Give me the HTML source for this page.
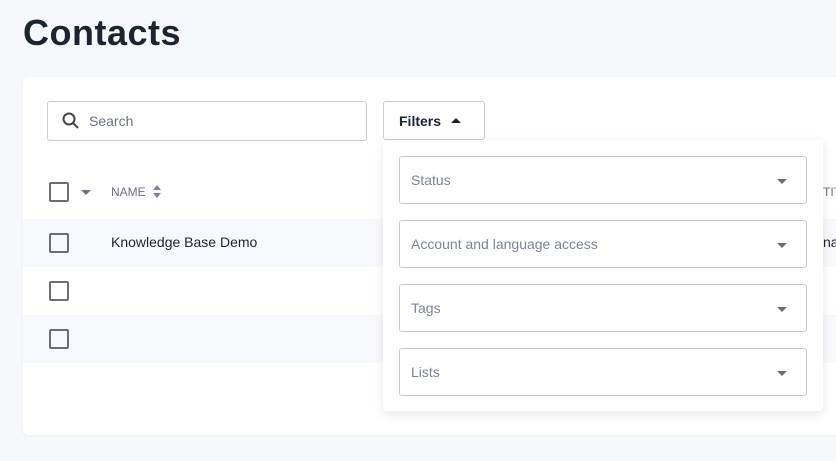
<!DOCTYPE html>
<html><head><style>
*{box-sizing:border-box;margin:0;padding:0}
body{width:836px;height:461px;overflow:hidden;background:#f7f8fc;font-family:"Liberation Sans",sans-serif;position:relative}
.abs{position:absolute}
h1{position:absolute;left:23px;top:12px;font-size:36px;font-weight:bold;color:#1c2432;letter-spacing:0.5px}
.card{left:23px;top:77px;width:830px;height:358px;background:#fff;border-radius:6px;box-shadow:0 1px 3px rgba(0,0,0,.05)}
.search{left:47px;top:101px;width:320px;height:40px;border:1px solid #c9ccd2;border-radius:3px;font-size:14px;color:#6b7280;padding:11px 0 0 41px}
.btn{left:383px;top:101px;width:102px;height:39px;border:1px solid #c9ccd2;border-radius:3px;font-size:14px;font-weight:bold;color:#1c2432;padding:11px 0 0 15px}
.cb{width:20px;height:20px;border:2px solid #6b6e73;border-radius:2px}
.row{left:23px;width:813px;height:48px;background:#f8f9fc}
.panel{left:383px;top:140px;width:440px;height:271px;background:#fff;box-shadow:0 3px 10px rgba(0,0,0,.1);border-radius:0 0 4px 4px}
.sel{left:16px;width:408px;height:48px;border:1px solid #c6c9cf;border-radius:3px;font-size:14px;color:#7b8494;padding:15px 0 0 11px}
.sel:after{content:"";position:absolute;right:19px;top:22px;border:5px solid transparent;border-top:5px solid #6b6e73;border-bottom:0}
</style></head><body>
<h1>Contacts</h1>
<div class="abs card"></div>
<div class="abs row" style="top:219px"></div>
<div class="abs row" style="top:315px"></div>
<div class="abs search"><svg class="abs" style="left:14px;top:10px" width="18" height="18" viewBox="0 0 18 18"><circle cx="7" cy="7" r="5.5" fill="none" stroke="#444" stroke-width="2"/><path d="M11 11l5 5" stroke="#444" stroke-width="2"/></svg>Search</div>
<div class="abs btn">Filters <span style="display:inline-block;margin-left:6px;border:5px solid transparent;border-bottom:5px solid #1c2432;border-top:0;vertical-align:3px"></span></div>
<div class="abs cb" style="left:49px;top:182px"></div>
<div class="abs" style="left:81px;top:190px;border:5px solid transparent;border-top:5px solid #6b7280;border-bottom:0"></div>
<div class="abs" style="left:111px;top:185px;font-size:12px;color:#6b7280">NAME</div>
<svg class="abs" style="left:152px;top:184px" width="10" height="15"><path d="M1 6l4-5 4 5zM1 9l4 5 4-5z" fill="#7b8494"/></svg>
<div class="abs cb" style="left:49px;top:233px"></div>
<div class="abs" style="left:111px;top:234px;font-size:14px;color:#1c2432">Knowledge Base Demo</div>
<div class="abs cb" style="left:49px;top:281px"></div>
<div class="abs cb" style="left:49px;top:329px"></div>
<div class="abs" style="left:823px;top:185px;font-size:12px;color:#6b7280">TIT</div>
<div class="abs" style="left:823px;top:234px;font-size:14px;color:#1c2432">nag</div>
<div class="abs panel">
<div class="abs sel" style="top:16px">Status</div>
<div class="abs sel" style="top:80px">Account and language access</div>
<div class="abs sel" style="top:144px">Tags</div>
<div class="abs sel" style="top:208px">Lists</div>
</div>
</body></html>
